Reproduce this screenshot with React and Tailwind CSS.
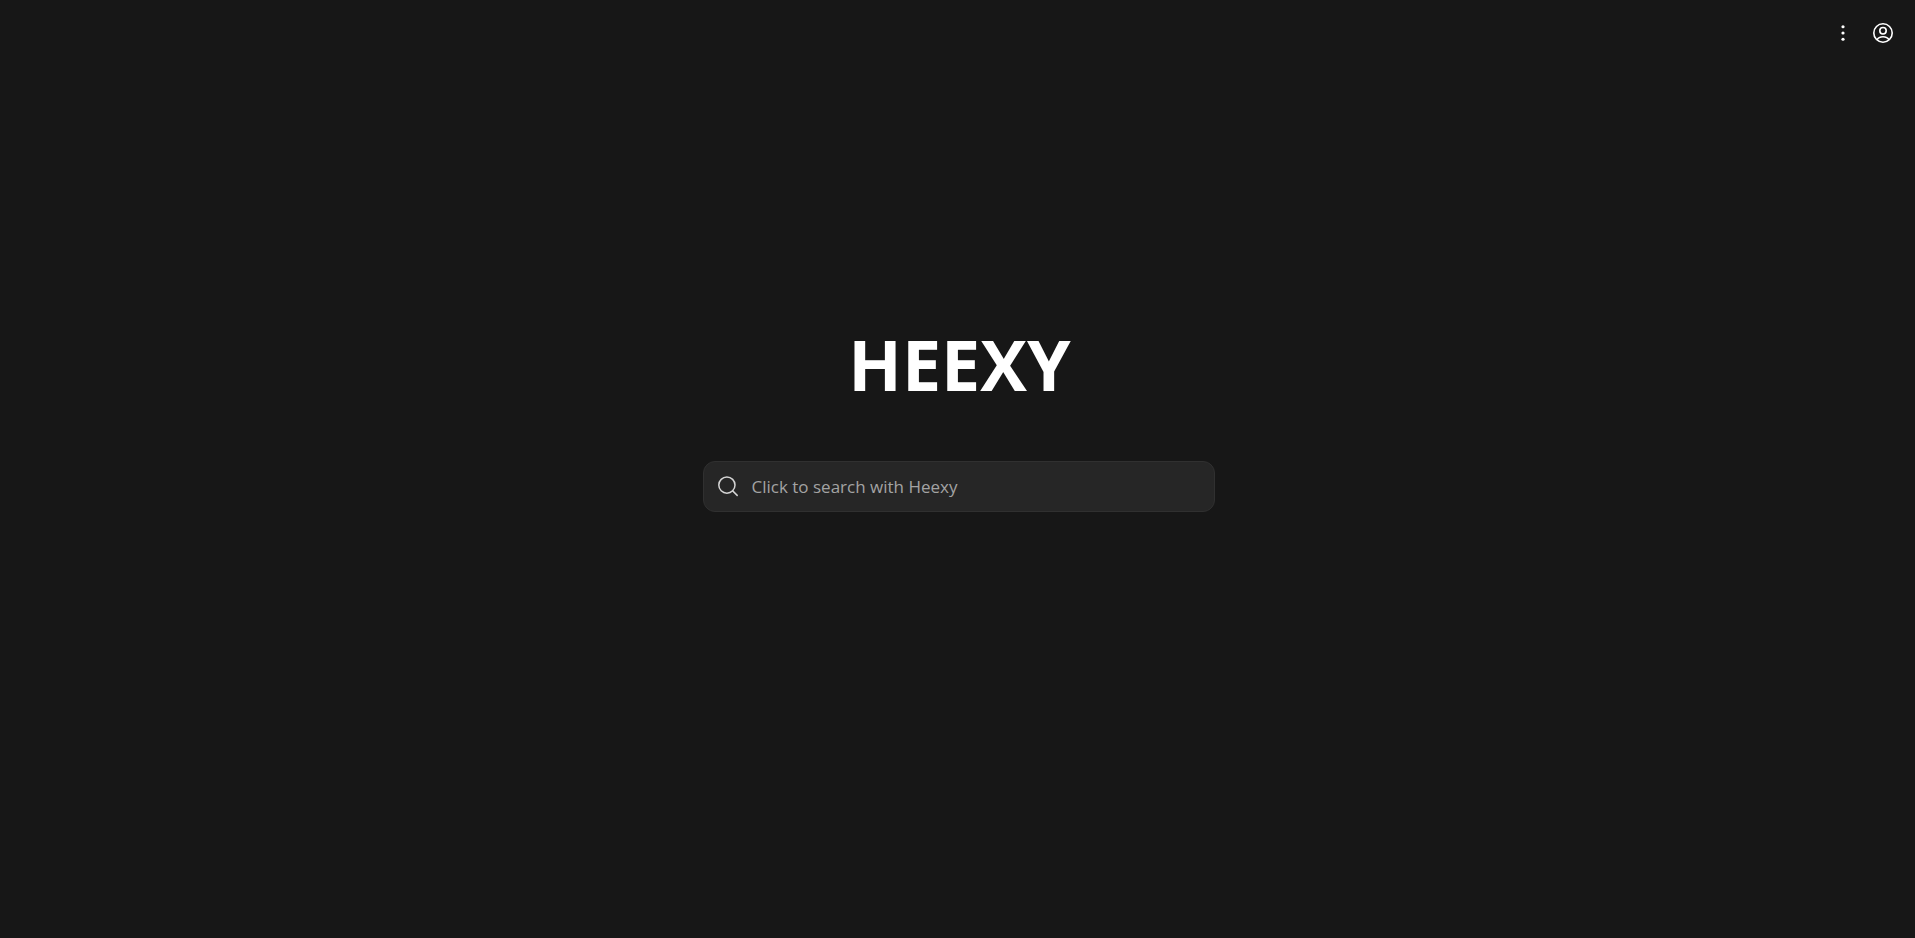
export default function App() {
  return (
    <div className="flex min-h-screen flex-col bg-[#171717] font-['Open_Sans','Noto_Sans',sans-serif] text-white">
      <header className="flex justify-end gap-4 px-5 pt-[21px]">
        <button type="button" aria-label="Menu" className="flex size-6 items-center justify-center">
          <svg viewBox="0 0 24 24" className="size-6" fill="currentColor" aria-hidden="true">
            <circle cx="12" cy="5.75" r="1.6" />
            <circle cx="12" cy="12" r="1.6" />
            <circle cx="12" cy="18.25" r="1.6" />
          </svg>
        </button>
        <button type="button" aria-label="Account" className="flex size-6 items-center justify-center">
          <svg viewBox="0 0 24 24" className="size-6" fill="none" stroke="currentColor" strokeWidth="1.6" aria-hidden="true">
            <circle cx="12" cy="12" r="9.2" />
            <circle cx="12" cy="9.75" r="3.2" />
            <path d="M6 18.9c1-2 3.2-3.1 6-3.1s5 1.1 6 3.1" />
          </svg>
        </button>
      </header>
      <main className="flex grow flex-col items-center pt-[269px] pr-4 pl-[18px]">
        <h1 className="pl-0.5 text-[70px] leading-[100px] font-[750]">HEEXY</h1>
        <form role="search" className="mt-[47px] w-full max-w-lg">
          <label className="flex h-[51px] items-center gap-3 rounded-xl border border-[#303030] bg-[#262626] px-3">
            <svg viewBox="0 0 24 24" className="size-6 shrink-0 text-[#d4d4d4]" fill="none" stroke="currentColor" strokeWidth="1.5" strokeLinecap="round" aria-hidden="true">
              <circle cx="10.9" cy="10.1" r="8.1" />
              <path d="m16.7 15.9 4.5 4.5" />
            </svg>
            <input type="text" aria-label="Search" placeholder="Click to search with Heexy" className="min-w-0 grow bg-transparent text-[17px] leading-6 outline-none placeholder:text-[#a3a3a3]" />
          </label>
        </form>
      </main>
    </div>
  );
}
